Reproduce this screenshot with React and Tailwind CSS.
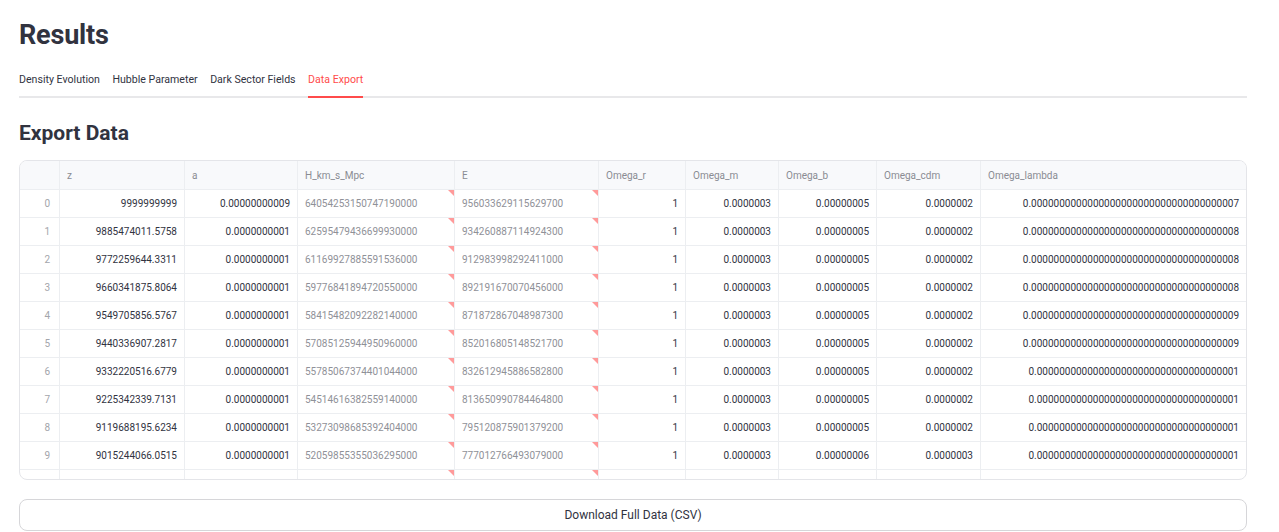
const zeros = (n) => '0'.repeat(n);

const rows = [
  ['9999999999', '0.00000000009', '64054253150747190000', '956033629115629700', '1', '0.0000003', '0.00000005', '0.0000002', `0.${zeros(36)}7`],
  ['9885474011.5758', '0.0000000001', '62595479436699930000', '934260887114924300', '1', '0.0000003', '0.00000005', '0.0000002', `0.${zeros(36)}8`],
  ['9772259644.3311', '0.0000000001', '61169927885591536000', '912983998292411000', '1', '0.0000003', '0.00000005', '0.0000002', `0.${zeros(36)}8`],
  ['9660341875.8064', '0.0000000001', '59776841894720550000', '892191670070456000', '1', '0.0000003', '0.00000005', '0.0000002', `0.${zeros(36)}8`],
  ['9549705856.5767', '0.0000000001', '58415482092282140000', '871872867048987300', '1', '0.0000003', '0.00000005', '0.0000002', `0.${zeros(36)}9`],
  ['9440336907.2817', '0.0000000001', '57085125944950960000', '852016805148521700', '1', '0.0000003', '0.00000005', '0.0000002', `0.${zeros(36)}9`],
  ['9332220516.6779', '0.0000000001', '55785067374401044000', '832612945886582800', '1', '0.0000003', '0.00000005', '0.0000002', `0.${zeros(35)}1`],
  ['9225342339.7131', '0.0000000001', '54514616382559140000', '813650990784464800', '1', '0.0000003', '0.00000005', '0.0000002', `0.${zeros(35)}1`],
  ['9119688195.6234', '0.0000000001', '53273098685392404000', '795120875901379200', '1', '0.0000003', '0.00000005', '0.0000002', `0.${zeros(35)}1`],
  ['9015244066.0515', '0.0000000001', '52059855355036295000', '777012766493079000', '1', '0.0000003', '0.00000006', '0.0000003', `0.${zeros(35)}1`],
  ['', '', '', '', '', '', '', '', ''],
];

const columns = ['z', 'a', 'H_km_s_Mpc', 'E', 'Omega_r', 'Omega_m', 'Omega_b', 'Omega_cdm', 'Omega_lambda'];
const textCols = [2, 3];

const tabs = ['Density Evolution', 'Hubble Parameter', 'Dark Sector Fields', 'Data Export'];

function Flag() {
  return (
    <span className="absolute top-0 right-0 w-0 h-0 border-t-[6px] border-l-[6px] border-t-[#ff9a9a] border-l-transparent" />
  );
}

function Row({ idx, values }) {
  return (
    <>
      <div className="h-[28px] border-r border-b border-[#eceef1] flex items-center justify-end px-[9px] text-[#a3a5ab]">
        {values[0] !== '' ? idx : ''}
      </div>
      {values.map((v, i) => {
        const isText = textCols.includes(i);
        const last = i === values.length - 1;
        return (
          <div
            key={i}
            className={`relative h-[28px] border-b border-[#eceef1] flex items-center px-[7px] ${last ? '' : 'border-r'} ${
              isText ? 'justify-start text-[#8f9198]' : 'justify-end text-[#31333f]'
            }`}
          >
            {v}
            {isText && <Flag />}
          </div>
        );
      })}
    </>
  );
}

export default function App() {
  return (
    <div className="w-[1279px] h-[532px] bg-white overflow-hidden font-['Roboto',sans-serif] text-[#31333f]">
      <div className="ml-[19px] w-[1228px]">
        <div className="h-[62px] pt-[8px] flex items-center">
          <h1 className="text-[27px] font-bold leading-none tracking-[-0.2px]">Results</h1>
        </div>

        <div className="h-[36px] flex gap-[12.5px] border-b-2 border-[#e8e8ea]">
          {tabs.map((t) => {
            const active = t === 'Data Export';
            return (
              <div
                key={t}
                className={`flex items-center pt-[2px] text-[10.6px] -mb-[2px] border-b-2 ${
                  active ? 'text-[#ff4b4b] border-[#ff4b4b]' : 'border-transparent'
                }`}
              >
                {t}
              </div>
            );
          })}
        </div>

        <div className="h-[62px] pt-[8px] flex items-center">
          <h2 className="text-[21px] font-bold leading-none">Export Data</h2>
        </div>

        <div className="h-[320px] border border-[#e4e5e9] rounded-lg overflow-hidden text-[10px]">
          <div className="grid grid-cols-[40px_125px_113px_157px_144px_87px_93px_98px_104px_1fr]">
            <div className="h-[29px] bg-[#f8f9fb] border-r border-b border-[#eceef1]" />
            {columns.map((c, i) => (
              <div
                key={c}
                className={`h-[29px] bg-[#f8f9fb] border-b border-[#eceef1] flex items-center px-[7px] text-[#8a8c93] ${
                  i === columns.length - 1 ? '' : 'border-r'
                }`}
              >
                {c}
              </div>
            ))}
            {rows.map((r, i) => (
              <Row key={i} idx={i} values={r} />
            ))}
          </div>
        </div>

        <button className="mt-[19px] w-full h-[32px] border border-[#d6d6d9] rounded-lg bg-white text-[12px] text-[#31333f] flex items-center justify-center">
          Download Full Data (CSV)
        </button>
      </div>
    </div>
  );
}
